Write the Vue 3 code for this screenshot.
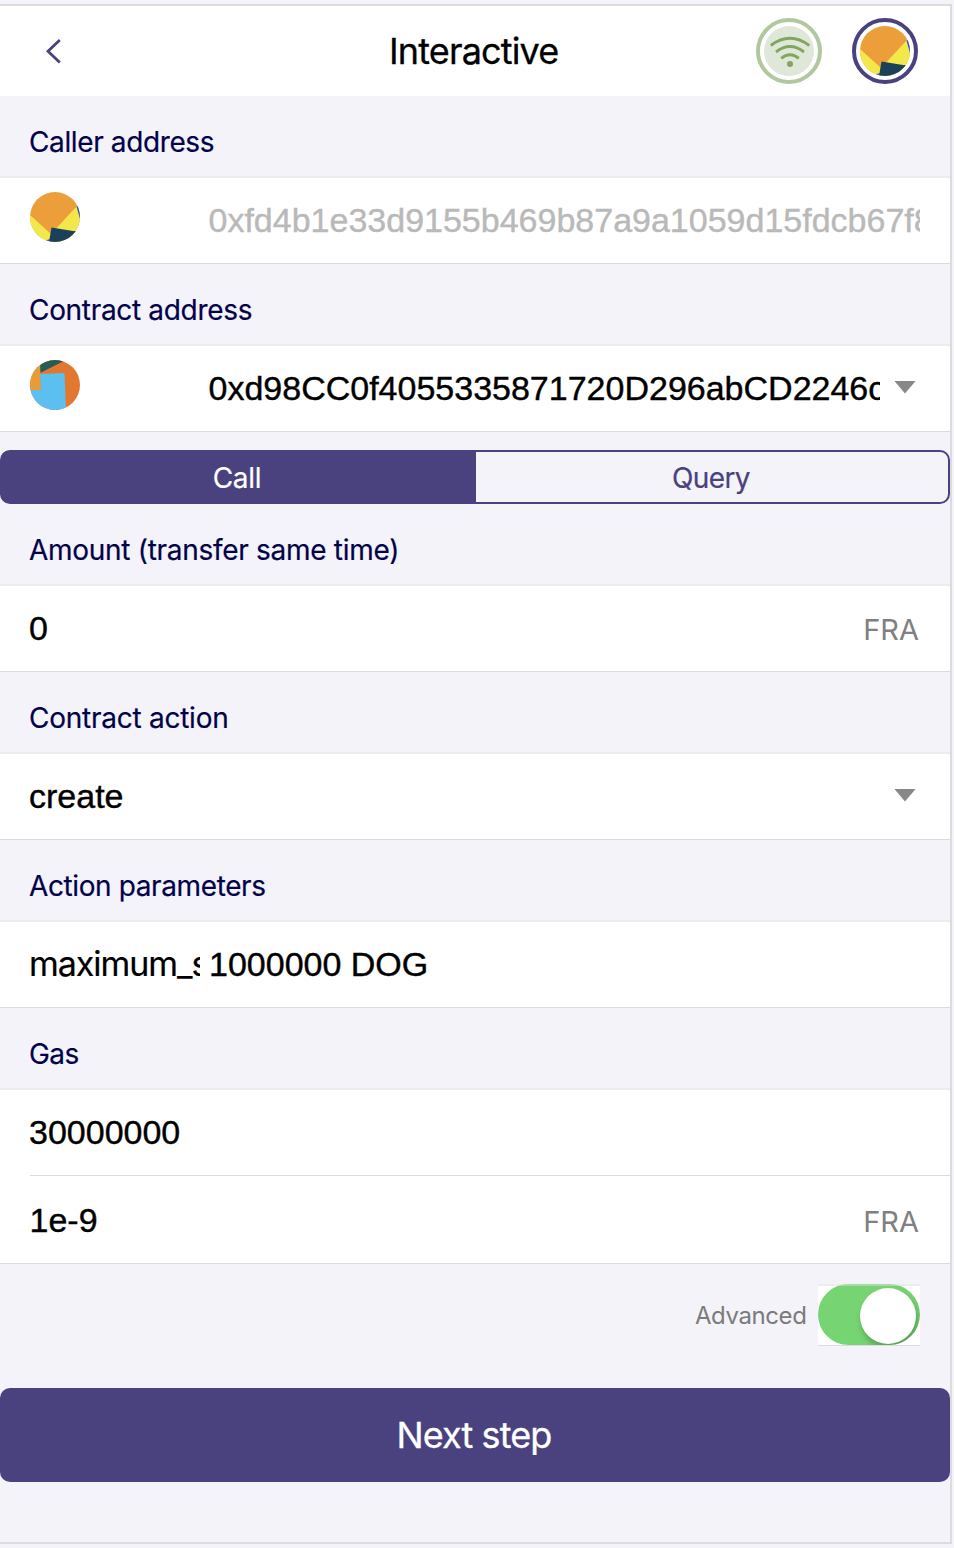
<script setup>
import { ref } from 'vue'

const mode = ref('Call')
const advanced = ref(true)
</script>

<template>
  <main class="page">
    <section class="panel">
      <header class="header">
        <button class="back" aria-label="Back">
          <svg width="20" height="28" viewBox="0 0 20 28"><path d="M16.8 3 5 14.2 16.8 25.5" /></svg>
        </button>
        <h1><span class="t-title">Interactive</span></h1>
        <div class="ring network">
          <svg width="50" height="50" viewBox="0 0 50 50">
            <circle cx="25" cy="25" r="25" fill="#dfe8d8" />
            <g fill="none" stroke="#82a65f" stroke-width="2.9">
              <path d="M6.8 19.5Q26 5.2 45.2 19.5" />
              <path d="M12 26Q26 15.2 40 26" />
              <path d="M17.2 32.3Q26 25 34.8 32.3" />
            </g>
            <circle cx="26" cy="38" r="3" fill="#82a65f" />
          </svg>
        </div>
        <div class="ring account">
          <svg class="avatar" viewBox="0 0 50 50">
            <path fill="#ec9e3a" d="M0 0h50v50H0z" />
            <path fill="#f3e84b" d="M0 23 21 42 47 14 50 23V50H0z" />
            <path fill="#2c4bd0" d="M46.5 14.5 50 11V27zM14 49 20 47 19 50H14zM44 39 47 39 43 43z" />
            <path fill="#1b4059" d="M21.5 35.5 46 39.5 42 50H19z" />
          </svg>
        </div>
      </header>

      <div class="label"><span class="l-caller">Caller address</span></div>
      <div class="row">
        <div class="lead">
          <svg class="avatar" viewBox="0 0 50 50">
            <path fill="#ec9e3a" d="M0 0h50v50H0z" />
            <path fill="#f3e84b" d="M0 23 21 42 47 14 50 23V50H0z" />
            <path fill="#2c4bd0" d="M46.5 14.5 50 11V27zM14 49 20 47 19 50H14zM44 39 47 39 43 43z" />
            <path fill="#1b4059" d="M21.5 35.5 46 39.5 42 50H19z" />
          </svg>
        </div>
        <div class="value muted">0xfd4b1e33d9155b469b87a9a1059d15fdcb67f8</div>
      </div>

      <div class="label"><span class="l-contract">Contract address</span></div>
      <div class="row">
        <div class="lead">
          <svg class="avatar" viewBox="0 0 50 50">
            <path fill="#e2782f" d="M0 0h50v50H0z" />
            <path fill="#285a58" d="M10 0H36L10 13zM45 9 50 19V9z" />
            <path fill="#e89b38" d="M0 0H10L11 30H0z" />
            <path fill="#5bbff0" d="M10 14 34.5 13 36 50H0V30H11z" />
          </svg>
        </div>
        <div class="value">0xd98CC0f4055335871720D296abCD2246c</div>
        <i class="arrow"></i>
      </div>

      <div class="tabs">
        <button :class="{ active: mode === 'Call' }" @click="mode = 'Call'"><span class="t-call">Call</span></button>
        <button :class="{ active: mode === 'Query' }" @click="mode = 'Query'"><span class="t-query">Query</span></button>
      </div>

      <div class="label"><span class="l-amount">Amount (transfer same time)</span></div>
      <div class="row">
        <div class="value">0</div>
        <span class="unit">FRA</span>
      </div>

      <div class="label"><span class="l-action">Contract action</span></div>
      <div class="row">
        <div class="value">create</div>
        <i class="arrow"></i>
      </div>

      <div class="label"><span class="l-params">Action parameters</span></div>
      <div class="row">
        <div class="lead name"><span>maximum_s</span></div>
        <div class="value supply">1000000 DOG</div>
      </div>

      <div class="label"><span class="l-gas">Gas</span></div>
      <div class="row joined"><div class="value">30000000</div></div>
      <div class="row last">
        <div class="value">1e-9</div>
        <span class="unit">FRA</span>
      </div>

      <div class="options">
        <span class="advanced">Advanced</span>
        <button class="switch" :class="{ on: advanced }" aria-label="Advanced" @click="advanced = !advanced">
          <span class="track"><span class="knob"></span></span>
        </button>
      </div>

      <button class="next"><span class="t-next">Next step</span></button>
    </section>
  </main>
</template>

<style>
body {
  background: #f4f3f9;
}
</style>

<style scoped>
* {
  box-sizing: border-box;
}
.page {
  height: 1548px;
  padding: 4px 2px 4px 0;
  background: #f4f3f9;
  font-family: Inter, "Liberation Sans", sans-serif;
  overflow: hidden;
}
.panel {
  height: 1540px;
  border: 2px solid #dcdcdc;
  border-left: 0;
}
button {
  margin: 0;
  padding: 0;
  border: 0;
  background: none;
  font-family: inherit;
}
span {
  white-space: nowrap;
}
.header {
  height: 90px;
  display: grid;
  grid-template-columns: 194px 1fr 66px 66px;
  column-gap: 30px;
  align-items: center;
  padding: 0 32px 0 0;
  background: #fff;
}
.back {
  width: 20px;
  height: 28px;
  margin-left: 43px;
}
.back svg {
  display: block;
}
.back path {
  fill: none;
  stroke: #4a427f;
  stroke-width: 2.8;
}
h1 {
  margin: 0;
  padding-left: 165px;
  font-size: 36px;
  font-weight: 400;
  line-height: 44px;
  letter-spacing: -0.85px;
  color: #000;
  -webkit-text-stroke: 0.3px currentColor;
}
.ring {
  width: 66px;
  height: 66px;
  border: 4px solid #4a427f;
  border-radius: 50%;
  padding: 4px;
}
.ring svg {
  display: block;
}
.network {
  border-color: #b1c79e;
}
.avatar {
  display: block;
  width: 50px;
  height: 50px;
  border-radius: 50%;
}
.label {
  height: 80px;
  padding: 12px 0 0 29px;
  font-size: 28px;
  line-height: 68px;
  color: #02024b;
  -webkit-text-stroke: 0.2px currentColor;
}
.l-caller {
  letter-spacing: -0.38px;
}
.l-contract {
  letter-spacing: -0.32px;
}
.l-amount {
  letter-spacing: -0.29px;
}
.l-action {
  letter-spacing: -0.25px;
}
.l-params {
  letter-spacing: -0.39px;
}
.l-gas {
  letter-spacing: -0.6px;
}
.row {
  height: 88px;
  display: flex;
  padding: 0 30px 0 29px;
  border-top: 2px solid #ededef;
  border-bottom: 1px solid #dcdcde;
  background: #fff;
}
.lead {
  flex: none;
  width: 179.5px;
  padding: 14px 0 0 1px;
}
.name {
  width: 171px;
  margin-right: 8px;
  padding: 0;
  overflow: hidden;
  font-size: 34px;
  line-height: 84px;
  letter-spacing: -1.05px;
  -webkit-text-stroke: 0.2px currentColor;
}
.value {
  flex: 1;
  min-width: 0;
  overflow: hidden;
  white-space: nowrap;
  font-family: "Liberation Sans", Arial, sans-serif;
  font-size: 34px;
  line-height: 85px;
  color: #000;
  -webkit-text-stroke: 0.4px currentColor;
}
.supply {
  padding-left: 1px;
}
.muted {
  color: #b9b9b9;
}
.arrow {
  flex: none;
  width: 22px;
  height: 13px;
  margin: 34.5px 4px 0 14px;
  background: #888;
  clip-path: polygon(0 0, 100% 0, 50% 100%);
}
.unit {
  padding-right: 1px;
  font-size: 29px;
  line-height: 88px;
  color: #808080;
}
.joined {
  border-bottom: 0;
  height: 87px;
}
.last {
  height: 89px;
  padding-left: 29.5px;
  border-top: 0;
  background: linear-gradient(#dcdcde, #dcdcde) 30px 0 / 100% 1px no-repeat #fff;
}
.last .value {
  line-height: 91px;
}
.last .unit {
  line-height: 93px;
}
.tabs {
  height: 54px;
  margin-top: 18px;
  display: grid;
  grid-template-columns: 474px 1fr;
  grid-template-rows: 50px;
  border: 2px solid #4a427f;
  border-radius: 10px;
  background: #f4f3f9;
}
.tabs button {
  padding-top: 3px;
  font-size: 28px;
  line-height: 47px;
  color: #4a427f;
  border-radius: 0 7px 7px 0;
  -webkit-text-stroke: 0.2px currentColor;
}
.tabs .active {
  margin: -1px 0 -1px -1px;
  border-radius: 8px 0 0 8px;
  background: #4a427f;
  color: #fff;
}
.t-call {
  margin-right: 3px;
  letter-spacing: -0.3px;
}
.t-query {
  margin-right: 2px;
  letter-spacing: -0.6px;
}
.options {
  height: 124px;
  display: flex;
  justify-content: flex-end;
  padding: 20px 30px 0 0;
}
.advanced {
  margin-right: 11.5px;
  font-size: 24px;
  line-height: 64px;
  letter-spacing: -0.4px;
  color: #7b7b7b;
}
.switch {
  width: 102px;
  height: 62px;
  border-top: 2px solid #ededef;
  border-bottom: 1px solid #dcdcde;
  background: #fff;
}
.track {
  display: block;
  width: 102px;
  height: 61px;
  margin-top: -2px;
  padding: 4px 4px;
  border-radius: 31px;
  background: #ccc;
  overflow: hidden;
}
.on .track {
  background: linear-gradient(#a9d9a7 2px, #76d572 2px);
}
.knob {
  display: block;
  width: 56px;
  height: 56px;
  border-radius: 50%;
  background: #fff;
  box-shadow: 2px 5px 7px rgba(0, 0, 0, 0.26);
}
.on .knob {
  margin-left: 38px;
}
.next {
  display: block;
  width: 100%;
  height: 94px;
  border-radius: 10px;
  background: #4a427f;
  color: #fff;
  font-size: 36px;
  line-height: 94px;
  letter-spacing: -0.88px;
  -webkit-text-stroke: 0.3px currentColor;
}
.t-next {
  margin-right: 2px;
}
</style>
